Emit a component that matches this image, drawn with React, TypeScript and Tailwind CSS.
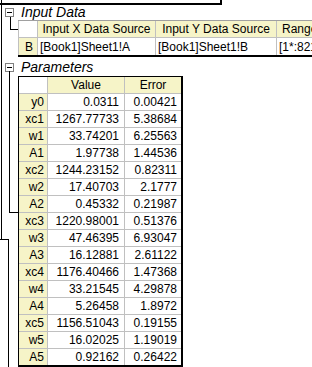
import React from "react";

const params: [string, string, string][] = [
  ["y0", "0.0311", "0.00421"],
  ["xc1", "1267.77733", "5.38684"],
  ["w1", "33.74201", "6.25563"],
  ["A1", "1.97738", "1.44536"],
  ["xc2", "1244.23152", "0.82311"],
  ["w2", "17.40703", "2.1777"],
  ["A2", "0.45332", "0.21987"],
  ["xc3", "1220.98001", "0.51376"],
  ["w3", "47.46395", "6.93047"],
  ["A3", "16.12881", "2.61122"],
  ["xc4", "1176.40466", "1.47368"],
  ["w4", "33.21545", "4.29878"],
  ["A4", "5.26458", "1.8972"],
  ["xc5", "1156.51043", "0.19155"],
  ["w5", "16.02025", "1.19019"],
  ["A5", "0.92162", "0.26422"],
];

function Minus() {
  return (
    <div className="w-[9px] h-[9px] border border-[#808080] bg-white flex items-center justify-center shrink-0">
      <div className="w-[5px] h-[1px] bg-black" />
    </div>
  );
}

export default function App() {
  return (
    <div className="relative w-[312px] h-[367px] overflow-hidden bg-white text-black text-[12px] font-['Liberation_Sans',Arial,sans-serif]">
      {/* tree lines */}
      <svg className="absolute left-0 top-0 pointer-events-none" width="20" height="367" shapeRendering="crispEdges">
        <line x1="1.5" y1="0" x2="1.5" y2="239" stroke="#000" strokeWidth="1" />
        <line x1="0" y1="239.5" x2="8" y2="239.5" stroke="#000" strokeWidth="1" />
        <line x1="8.5" y1="239" x2="8.5" y2="367" stroke="#000" strokeWidth="1" />
        <line x1="10.5" y1="17" x2="10.5" y2="30" stroke="#000" strokeWidth="1" />
        <line x1="10" y1="29.5" x2="18" y2="29.5" stroke="#000" strokeWidth="1" />
        <line x1="9.5" y1="71" x2="9.5" y2="213" stroke="#000" strokeWidth="1" />
        <line x1="9" y1="212.5" x2="18" y2="212.5" stroke="#000" strokeWidth="1" />
      </svg>

      {/* bottom of previous box */}
      <div className="w-[222px] h-[5px] border-b-2 border-r-2 border-black" />

      {/* Input Data title */}
      <div className="flex items-start h-[15px] pl-[5px]">
        <div className="mt-[3px]">
          <Minus />
        </div>
        <span className="ml-[7px] mt-[2px] italic text-[14px] leading-[10px]">Input Data</span>
      </div>

      {/* Input Data table */}
      <div className="ml-[18px] w-[294px] border-t border-[#a0a0a0] border-b-2 border-b-black">
        <div className="flex h-[17px] border-b border-[#c0c0c0]">
          <div className="w-[20px] shrink-0 border-r border-l border-[#c0c0c0] bg-white" />
          <div className="w-[118px] shrink-0 border-r border-[#c0c0c0] bg-[#f6f4c8] flex items-center justify-center">
            Input X Data Source
          </div>
          <div className="w-[121px] shrink-0 border-r border-[#c0c0c0] bg-[#f6f4c8] flex items-center justify-center">
            Input Y Data Source
          </div>
          <div className="w-[80px] shrink-0 bg-[#f6f4c8] flex items-center pl-[5px] whitespace-nowrap">
            Range
          </div>
        </div>
        <div className="flex h-[17px]">
          <div className="w-[20px] shrink-0 border-r border-l border-[#c0c0c0] bg-[#f6f4c8] flex items-center justify-end pr-[4px]">
            B
          </div>
          <div className="w-[118px] shrink-0 border-r border-[#c0c0c0] flex items-center pl-[2px]">
            [Book1]Sheet1!A
          </div>
          <div className="w-[121px] shrink-0 border-r border-[#c0c0c0] flex items-center pl-[2px]">
            [Book1]Sheet1!B
          </div>
          <div className="w-[80px] shrink-0 flex items-center pl-[2px] whitespace-nowrap">
            [1*:821*]
          </div>
        </div>
      </div>

      {/* Parameters title */}
      <div className="flex items-start h-[19px] pl-[5px]">
        <div className="mt-[6px]">
          <Minus />
        </div>
        <span className="ml-[7px] mt-[5px] italic text-[14px] leading-[10px]">Parameters</span>
      </div>

      {/* Parameters table */}
      <div className="ml-[18px] w-[165px] border-t border-l border-black border-r-2 border-b-2">
        <div className="flex h-[17px] border-b border-[#c0c0c0]">
          <div className="w-[29px] shrink-0 border-r border-[#c0c0c0] bg-white" />
          <div className="w-[77px] shrink-0 border-r border-[#c0c0c0] bg-[#f6f4c8] flex items-center justify-center">
            Value
          </div>
          <div className="w-[56px] shrink-0 bg-[#f6f4c8] flex items-center justify-center">Error</div>
        </div>
        {params.map(([n, v, e], i) => (
          <div
            key={n}
            className={
              i === params.length - 1
                ? "flex h-[16px]"
                : "flex h-[17px] border-b border-[#c0c0c0]"
            }
          >
            <div className="w-[29px] shrink-0 border-r border-[#c0c0c0] bg-[#f6f4c8] flex items-center justify-end pr-[3px]">
              {n}
            </div>
            <div className="w-[77px] shrink-0 border-r border-[#c0c0c0] flex items-center justify-end pr-[5px]">
              {v}
            </div>
            <div className="w-[56px] shrink-0 flex items-center justify-end pr-[4px]">{e}</div>
          </div>
        ))}
      </div>
    </div>
  );
}
